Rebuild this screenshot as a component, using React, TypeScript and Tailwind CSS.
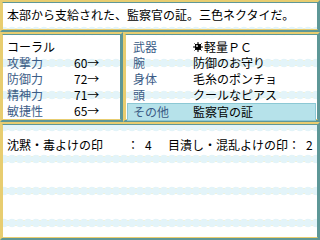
import React from "react";

const PAT =
  "bg-white bg-fixed bg-[radial-gradient(circle_at_4px_16px,#e3f4f9_0,#e3f4f9_4px,transparent_4.6px),linear-gradient(to_bottom,transparent_13px,#f8efc4_13px,#f8efc4_19px,transparent_19px)] bg-[length:8px_32px] bg-[position:0px_15px]";

function Win({ className = "", inner = "", children }: { className?: string; inner?: string; children?: React.ReactNode }) {
  return (
    <div className={`border-2 border-t-[#e8cd70] border-l-[#e8cd70] border-r-[#5e9797] border-b-[#5e9797] ${className}`}>
      <div className={`h-full border border-t-[#5e9797] border-l-[#e8cd70] border-r-[#5e9797] border-b-[#e8cd70] ${PAT} ${inner}`}>
        {children}
      </div>
    </div>
  );
}

function Spark() {
  return (
    <svg width="10" height="10" viewBox="0 0 10 10" className="mr-[1px] shrink-0">
      <g stroke="#000" strokeWidth="1">
        <line x1="5" y1="0" x2="5" y2="10" />
        <line x1="0" y1="5" x2="10" y2="5" />
        <line x1="1.5" y1="1.5" x2="8.5" y2="8.5" />
        <line x1="8.5" y1="1.5" x2="1.5" y2="8.5" />
      </g>
      <circle cx="5" cy="5" r="3.2" fill="#000" />
      <circle cx="4" cy="4" r="0.9" fill="#fff" />
    </svg>
  );
}

const stats = [
  ["攻撃力", "60→"],
  ["防御力", "72→"],
  ["精神力", "71→"],
  ["敏捷性", "65→"],
];

const equip: [string, React.ReactNode][] = [
  ["武器", <span className="flex items-center"><Spark />軽量ＰＣ</span>],
  ["腕", "防御のお守り"],
  ["身体", "毛糸のポンチョ"],
  ["頭", "クールなピアス"],
];

export default function App() {
  return (
    <div
      className="w-[320px] h-[240px] flex flex-col bg-white text-[12px] leading-[16px] text-black overflow-hidden"
      style={{ fontFamily: '"Noto Sans CJK JP", "Noto Sans", sans-serif' }}
    >
      <Win className="h-[32px]" inner="pl-[4px] pt-[4px]">
        <div>本部から支給された、監察官の証。三色ネクタイだ。</div>
      </Win>
      <div className="flex h-[90px]">
        <Win className="w-[123px]" inner="pl-[4px] pt-[4px]">
          <div>コーラル</div>
          {stats.map(([k, v]) => (
            <div key={k} className="flex">
              <span className="w-[67px] text-[#3b5c86]">{k}</span>
              <span>{v}</span>
            </div>
          ))}
        </Win>
        <Win className="flex-1" inner="pl-[1px] pr-[1px] pt-[4px]">
          {equip.map(([k, v]) => (
            <div key={k} className="flex pl-[6px]">
              <span className="w-[60px] text-[#3b5c86]">{k}</span>
              <span>{v}</span>
            </div>
          ))}
          <div className="flex pl-[5px] bg-[#b6e2ea] border border-[#8cc8d4]">
            <span className="w-[60px] text-[#3b5c86]">その他</span>
            <span>監察官の証</span>
          </div>
        </Win>
      </div>
      <Win className="flex-1" inner="pl-[4px] pt-[12px]">
        <div className="flex">
          <span className="w-[120px]">沈黙・毒よけの印</span>
          <span className="w-[18px]">：</span>
          <span className="w-[23px]">4</span>
          <span className="w-[120px]">目潰し・混乱よけの印</span>
          <span className="w-[18px]">：</span>
          <span>2</span>
        </div>
      </Win>
    </div>
  );
}
